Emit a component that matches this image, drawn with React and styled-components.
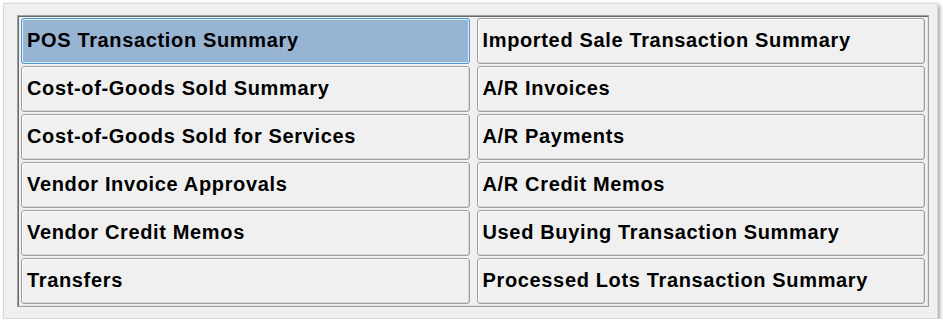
import React, { useState } from "react";
import styled, { createGlobalStyle } from "styled-components";

const GlobalStyle = createGlobalStyle`
  html, body {
    margin: 0;
    padding: 0;
    background: #ffffff;
  }
`;

const Window = styled.div`
  box-sizing: border-box;
  margin: 3px 0 0 3px;
  width: 935px;
  height: 316px;
  background: #f0f0f0;
  border: 1px solid #d9d9d9;
  box-shadow: 2px 2px 4px rgba(0, 0, 0, 0.35);
  padding: 11px 0 0 13px;
`;

const Panel = styled.div`
  box-sizing: border-box;
  width: 912px;
  border: 1px solid #a0a0a0;
  box-shadow: inset 1px 1px 0 #696969, inset -1px -1px 0 #e3e3e3;
  padding: 2px 3px 2px 3px;
`;

const Grid = styled.div`
  display: grid;
  grid-template-columns: 1fr 1fr;
  grid-auto-rows: 46px;
  column-gap: 7px;
  row-gap: 2px;
`;

const ReportButton = styled.button`
  box-sizing: border-box;
  display: flex;
  align-items: center;
  margin: 0;
  padding: 0 0 2px 5px;
  text-align: left;
  font-family: "Liberation Sans", Arial, sans-serif;
  font-weight: bold;
  font-size: 20px;
  letter-spacing: 0.65px;
  color: #000;
  border-radius: 3px;
  cursor: pointer;
  border: 1px solid ${(p) => (p.$selected ? "#4f97d0" : "#9e9e9e")};
  background: ${(p) => (p.$selected ? "#98b4d3" : "#f0f0f0")};
  box-shadow: ${(p) =>
    p.$selected
      ? "inset 0 0 0 1px #d9ecfa"
      : "inset 1px 1px 0 #fcfcfc, inset -1px -1px 0 #dadada"};
  outline: none;
`;

const reports = [
  "POS Transaction Summary",
  "Imported Sale Transaction Summary",
  "Cost-of-Goods Sold Summary",
  "A/R Invoices",
  "Cost-of-Goods Sold for Services",
  "A/R Payments",
  "Vendor Invoice Approvals",
  "A/R Credit Memos",
  "Vendor Credit Memos",
  "Used Buying Transaction Summary",
  "Transfers",
  "Processed Lots Transaction Summary",
];

export default function App() {
  const [selected, setSelected] = useState(0);
  return (
    <>
      <GlobalStyle />
      <Window>
        <Panel>
          <Grid>
            {reports.map((name, i) => (
              <ReportButton
                key={name}
                $selected={i === selected}
                onClick={() => setSelected(i)}
              >
                {name}
              </ReportButton>
            ))}
          </Grid>
        </Panel>
      </Window>
    </>
  );
}
